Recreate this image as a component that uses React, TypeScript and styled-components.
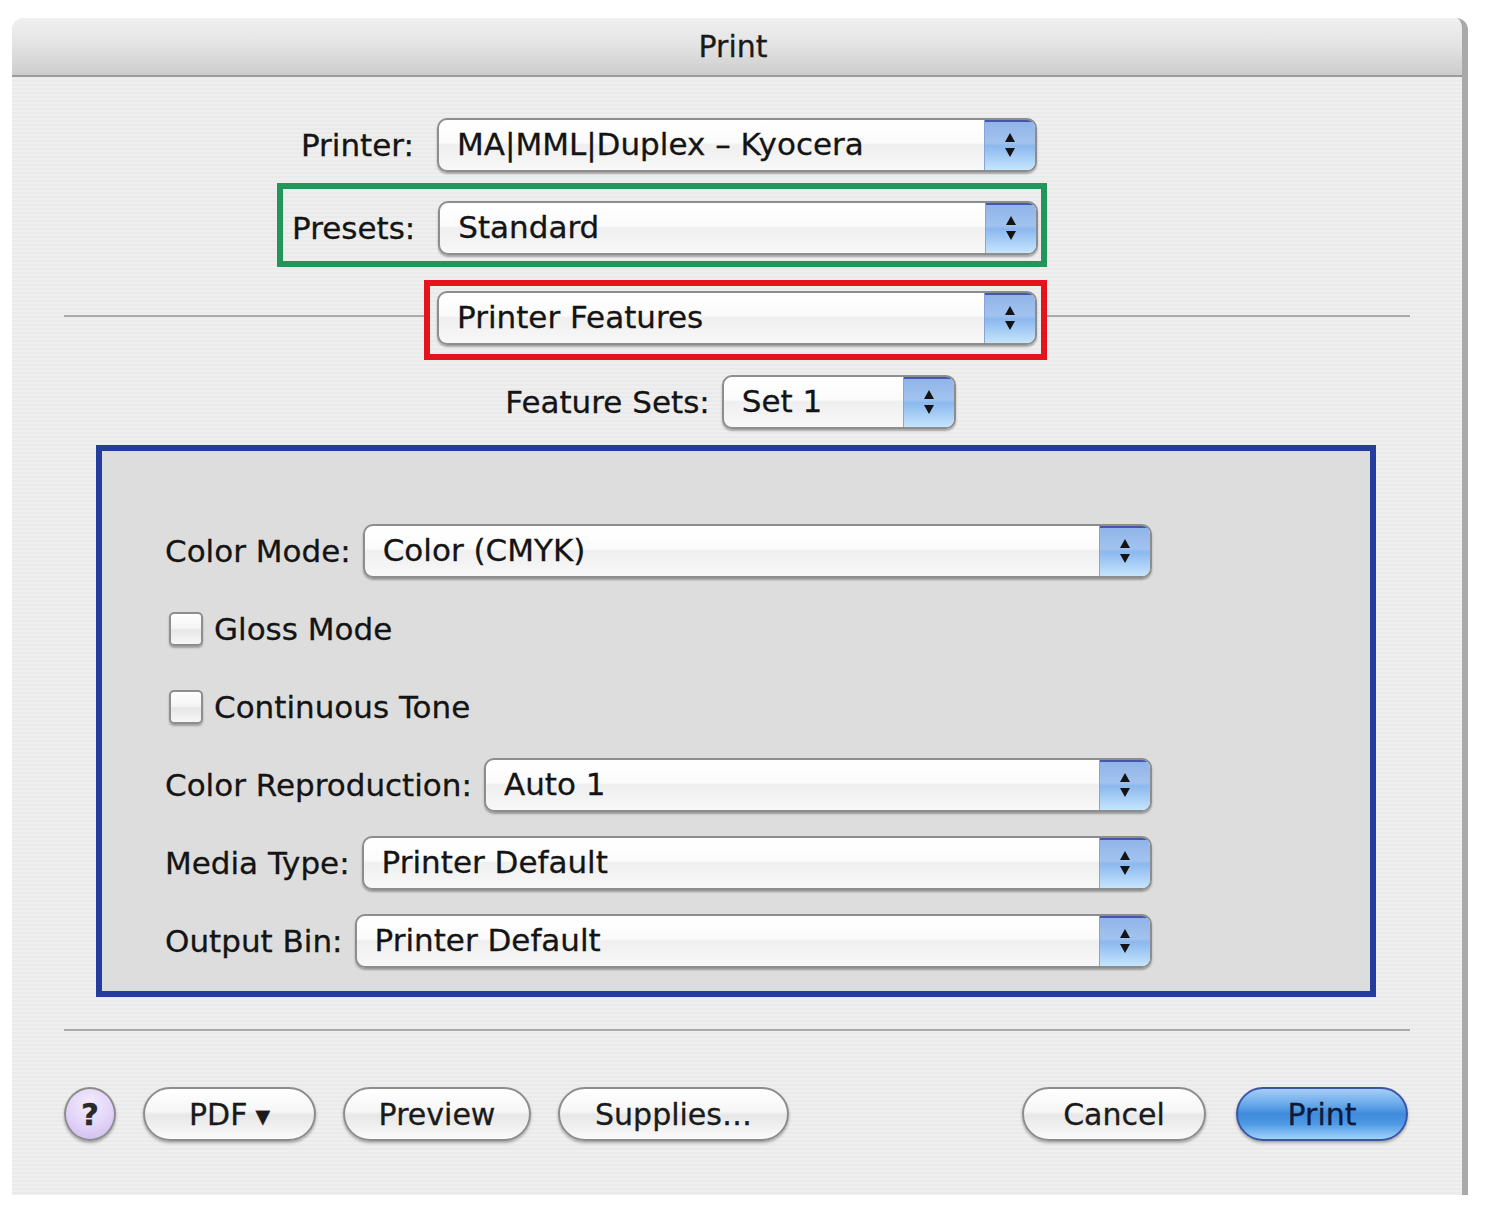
import React from "react";
import styled, { createGlobalStyle } from "styled-components";

const GlobalStyle = createGlobalStyle`
  html, body {
    margin: 0;
    padding: 0;
    background: #ffffff;
  }
  body {
    font-family: "DejaVu Sans", "Liberation Sans", sans-serif;
    color: #141414;
    -webkit-text-stroke: 0.3px currentColor;
  }
`;

const Page = styled.div`
  width: 1500px;
  height: 1227px;
  box-sizing: border-box;
  padding: 18px 0 0 12px;
`;

const Window = styled.div`
  width: 1456px;
  height: 1177px;
  box-sizing: border-box;
  border-right: 6px solid #a9a9a9;
  border-radius: 12px 12px 0 0;
  background: repeating-linear-gradient(
    to bottom,
    #efefef 0px,
    #efefef 2px,
    #eaeaea 2px,
    #eaeaea 4px
  );
  display: flex;
  flex-direction: column;
  overflow: hidden;
`;

const TitleBar = styled.div`
  height: 57px;
  border-bottom: 2px solid #9c9c9c;
  background: linear-gradient(to bottom, #f0f0f0 0%, #e4e4e4 45%, #cdcdcd 100%);
  display: flex;
  align-items: center;
  justify-content: center;
  padding-right: 8px;
  font-size: 30px;
  color: #1a1a1a;
`;

const Content = styled.div`
  display: flex;
  flex-direction: column;
  padding-top: 41px;
`;

const MainRow = styled.div`
  display: grid;
  grid-template-columns: 425px 600px;
  align-items: center;
`;

const Label = styled.span<{ $right?: boolean }>`
  font-size: 31px;
  white-space: nowrap;
  text-align: ${({ $right }) => ($right ? "right" : "left")};
  padding-right: ${({ $right }) => ($right ? "23px" : "0")};
`;

const PresetsRow = styled.div`
  display: flex;
  padding-left: 265px;
  margin-top: 11px;
`;

const GreenBox = styled.div`
  width: 770px;
  height: 84px;
  box-sizing: border-box;
  border: 6px solid #22955a;
  padding: 12px 4px 6px 9px;
  display: flex;
  align-items: center;
  gap: 23px;
  & > ${Label} {
    flex: 1;
  }
`;

const SectionRow = styled.div`
  display: flex;
  align-items: flex-start;
  padding: 0 52px;
  margin-top: 13px;
`;

const LineSeg = styled.div<{ $w?: number }>`
  height: 2px;
  margin-top: 35px;
  background: #a9a9a9;
  width: ${({ $w }) => ($w ? `${$w}px` : "auto")};
  flex: ${({ $w }) => ($w ? "none" : "1")};
`;

const RedBox = styled.div`
  width: 623px;
  height: 80px;
  box-sizing: border-box;
  border: 6px solid #e3141c;
  padding: 5px 4px 9px 7px;
  display: flex;
`;

const FeatureRow = styled.div`
  display: flex;
  justify-content: center;
  align-items: center;
  gap: 12px;
  margin-top: 15px;
  padding-right: 13px;
`;

const Panel = styled.div`
  margin: 16px 86px 0 84px;
  height: 552px;
  box-sizing: border-box;
  border: 6px solid #243c9e;
  background: #dddddd;
  padding: 61px 218px 11px 63px;
  display: flex;
  flex-direction: column;
`;

const PanelRow = styled.div`
  height: 78px;
  display: flex;
  align-items: center;
  gap: 12px;
`;

const CheckRow = styled.label`
  height: 78px;
  display: flex;
  align-items: center;
  gap: 11px;
  padding-left: 4px;
  font-size: 31px;
`;

const CheckBox = styled.span`
  width: 34px;
  height: 34px;
  box-sizing: border-box;
  border: 2px solid #8e8e8e;
  border-radius: 5px;
  background: linear-gradient(to bottom, #ffffff 0%, #f3f3f3 50%, #e6e6e6 52%, #f7f7f7 100%);
  box-shadow: 0 2px 2px rgba(0, 0, 0, 0.28);
`;

const Separator = styled.div`
  height: 2px;
  background: #a9a9a9;
  margin: 32px 52px 0 52px;
`;

const ButtonBar = styled.div`
  display: flex;
  align-items: center;
  margin-top: 56px;
  padding: 0 54px 0 52px;
`;

const ButtonGroup = styled.div<{ $gap: number }>`
  display: flex;
  align-items: center;
  gap: ${({ $gap }) => $gap}px;
`;

const Spacer = styled.div`
  flex: 1;
`;

const HelpButton = styled.button`
  width: 52px;
  height: 54px;
  box-sizing: border-box;
  border-radius: 50%;
  border: 2px solid #8c8c8c;
  background: radial-gradient(circle at 50% 30%, #f4ecfe 0%, #e1d3f7 55%, #cbb8ec 100%);
  box-shadow: 0 2px 3px rgba(0, 0, 0, 0.3);
  font-family: "DejaVu Sans", sans-serif;
  font-size: 31px;
  font-weight: bold;
  color: #2a2a2a;
  padding: 0;
  display: flex;
  align-items: center;
  justify-content: center;
`;

const PillButton = styled.button<{ $w: number; $primary?: boolean }>`
  width: ${({ $w }) => $w}px;
  height: 54px;
  box-sizing: border-box;
  border-radius: 27px;
  border: 2px solid ${({ $primary }) => ($primary ? "#3a55a6" : "#8c8c8c")};
  background: ${({ $primary }) =>
    $primary
      ? "linear-gradient(to bottom, #a6cdf5 0%, #6aaaea 30%, #3f8adb 50%, #4f9ae4 70%, #9fd3fb 100%)"
      : "linear-gradient(to bottom, #ffffff 0%, #f6f6f6 45%, #e7e7e7 52%, #f2f2f2 80%, #fbfbfb 100%)"};
  box-shadow: 0 2px 3px rgba(0, 0, 0, 0.3);
  font-family: "DejaVu Sans", sans-serif;
  font-size: 30px;
  color: ${({ $primary }) => ($primary ? "#0e1a3a" : "#1a1a1a")};
  padding: 0;
  display: flex;
  align-items: center;
  justify-content: center;
  gap: 8px;
`;

const Caret = styled.span`
  font-size: 19px;
  margin-top: 3px;
`;

const PopupBox = styled.div<{ $w?: number }>`
  display: flex;
  height: 54px;
  box-sizing: border-box;
  width: ${({ $w }) => ($w ? `${$w}px` : "auto")};
  flex: ${({ $w }) => ($w ? "none" : "1")};
  border: 2px solid #8d8d8d;
  border-radius: 10px;
  background: linear-gradient(to bottom, #ffffff 0%, #fbfbfb 45%, #efefef 50%, #f8f8f8 100%);
  box-shadow: 0 2px 2px rgba(0, 0, 0, 0.3);
  overflow: hidden;
`;

const PopupText = styled.span`
  flex: 1;
  padding-left: 18px;
  font-size: 31px;
  line-height: 48px;
  white-space: nowrap;
  overflow: hidden;
`;

const PopupArrows = styled.div`
  width: 50px;
  border-left: 1px solid #8aa4d6;
  background: linear-gradient(to bottom, #8fb3e8 0%, #a2c3ef 45%, #8bb8ee 52%, #c6e5fd 100%);
  box-shadow: inset 0 2px 0 #4656a8;
  display: flex;
  align-items: center;
  justify-content: center;
`;

const Arrows = () => (
  <svg width="14" height="30" viewBox="0 0 14 30">
    <path d="M7 3 L12 12 L2 12 Z" fill="#141414" />
    <path d="M2 18 L12 18 L7 27 Z" fill="#141414" />
  </svg>
);

const Popup = ({ value, width }: { value: string; width?: number }) => (
  <PopupBox $w={width}>
    <PopupText>{value}</PopupText>
    <PopupArrows>
      <Arrows />
    </PopupArrows>
  </PopupBox>
);

const Check = ({ label }: { label: string }) => (
  <CheckRow>
    <CheckBox />
    {label}
  </CheckRow>
);

const featureRows = [
  { label: "Color Reproduction:", value: "Auto 1" },
  { label: "Media Type:", value: "Printer Default" },
  { label: "Output Bin:", value: "Printer Default" },
];

const App = () => {
  return (
    <Page>
      <GlobalStyle />
      <Window>
        <TitleBar>Print</TitleBar>
        <Content>
          <MainRow>
            <Label $right>Printer:</Label>
            <Popup value="MA|MML|Duplex – Kyocera" width={600} />
          </MainRow>

          <PresetsRow>
            <GreenBox>
              <Label>Presets:</Label>
              <Popup value="Standard" width={600} />
            </GreenBox>
          </PresetsRow>

          <SectionRow>
            <LineSeg $w={360} />
            <RedBox>
              <Popup value="Printer Features" />
            </RedBox>
            <LineSeg />
          </SectionRow>

          <FeatureRow>
            <Label>Feature Sets:</Label>
            <Popup value="Set 1" width={234} />
          </FeatureRow>

          <Panel>
            <PanelRow>
              <Label>Color Mode:</Label>
              <Popup value="Color (CMYK)" />
            </PanelRow>
            <Check label="Gloss Mode" />
            <Check label="Continuous Tone" />
            {featureRows.map((row) => (
              <PanelRow key={row.label}>
                <Label>{row.label}</Label>
                <Popup value={row.value} />
              </PanelRow>
            ))}
          </Panel>

          <Separator />

          <ButtonBar>
            <ButtonGroup $gap={27}>
              <HelpButton>?</HelpButton>
              <PillButton $w={173}>
                PDF<Caret>▼</Caret>
              </PillButton>
              <PillButton $w={188}>Preview</PillButton>
              <PillButton $w={231}>Supplies…</PillButton>
            </ButtonGroup>
            <Spacer />
            <ButtonGroup $gap={30}>
              <PillButton $w={184}>Cancel</PillButton>
              <PillButton $w={172} $primary>
                Print
              </PillButton>
            </ButtonGroup>
          </ButtonBar>
        </Content>
      </Window>
    </Page>
  );
};

export default App;
